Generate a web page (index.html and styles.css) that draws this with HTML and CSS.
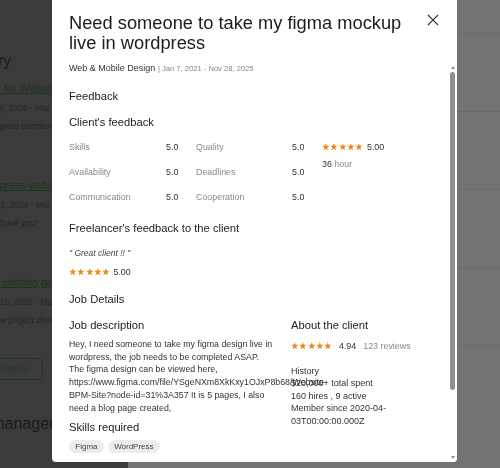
FILE: index.html
```html
<!DOCTYPE html>
<html lang="en">
<head>
<meta charset="utf-8">
<title>Job feedback</title>
<link rel="stylesheet" href="styles.css">
</head>
<body>
<svg class="defs" aria-hidden="true"><symbol id="star" viewBox="0 0 10 10"><path d="M5 .4L6.25 3.6L9.75 3.75L7 5.95L7.95 9.4L5 7.45L2.05 9.4L3 5.95L.25 3.75L3.75 3.6Z"/></symbol></svg>

<div class="page">
  <main class="bg-main">
    <h2 class="bg-h bg-h1">Work History</h2>
    <div class="job job-first">
      <a class="job-link l1">Designer for Website redesign</a>
      <div class="job-date d1">Jan 9, 2026 - Mar 2, 2026</div>
      <div class="job-quote q1">"Was a great communicator"</div>
    </div>
    <div class="job">
      <a class="job-link l2">Wordpress webpage build</a>
      <div class="job-date d2">Feb 3, 2026 - Mar 2, 2026</div>
      <div class="job-quote q2">"Thank you"</div>
    </div>
    <div class="job">
      <a class="job-link l3">Update existing page</a>
      <div class="job-date d3">Dec 15, 2025 - Mar 1, 2026</div>
      <div class="job-quote q3">"Gave new project direction"</div>
    </div>
    <button class="bg-btn">View all history</button>
    <h2 class="bg-h bg-h2">Project manager</h2>
  </main>
  <aside class="bg-side">
    <div class="side-row side-first"></div>
    <div class="side-row"></div>
    <div class="side-row"></div>
    <div class="side-row"></div>
    <div class="side-row"></div>
  </aside>
</div>

<div class="overlay">
  <div class="modal">
    <header class="modal-head">
      <h1 class="title">Need someone to take my figma mockup live in wordpress</h1>
      <button class="close" aria-label="Close"><svg viewBox="0 0 12 12"><path d="M1 1L11 11M11 1L1 11"/></svg></button>
    </header>
    <div class="modal-main">
      <div class="modal-body">
        <div class="meta">Web &amp; Mobile Design <span class="dates">| Jan 7, 2021 - Nov 28, 2025</span></div>

        <h2 class="h-sec h-feedback">Feedback</h2>
        <h3 class="h-sec h-client">Client's feedback</h3>
        <div class="ratings">
          <div class="scores">
            <span class="lbl">Skills</span><span class="val">5.0</span>
            <span class="lbl">Quality</span><span class="val">5.0</span>
            <span class="lbl">Availability</span><span class="val">5.0</span>
            <span class="lbl">Deadlines</span><span class="val">5.0</span>
            <span class="lbl">Communication</span><span class="val">5.0</span>
            <span class="lbl">Cooperation</span><span class="val">5.0</span>
          </div>
          <div class="overall">
            <div class="overall-stars">
              <span class="stars"><svg><use href="#star"/></svg><svg><use href="#star"/></svg><svg><use href="#star"/></svg><svg><use href="#star"/></svg><svg><use href="#star"/></svg></span>
              <span class="score">5.00</span>
            </div>
            <div class="hours"><span class="num">36</span> hour</div>
          </div>
        </div>

        <h3 class="h-sec h-freelancer">Freelancer's feedback to the client</h3>
        <div class="quote">" Great client !! "</div>
        <div class="rating-line">
          <span class="stars"><svg><use href="#star"/></svg><svg><use href="#star"/></svg><svg><use href="#star"/></svg><svg><use href="#star"/></svg><svg><use href="#star"/></svg></span>
          <span class="score">5.00</span>
        </div>

        <h2 class="h-sec h-details">Job Details</h2>
        <div class="details">
          <div class="details-main">
            <h3 class="h-sec h-sub">Job description</h3>
            <p class="desc">Hey, I need someone to take my figma design live in wordpress, the job needs to be completed ASAP. The figma design can be viewed here, https://www.figma.com/file/YSgeNXm8XkKxy1OJxP8b68/Website-BPM-Site?node-id=31%3A357 It is 5 pages, I also need a blog page created,</p>
            <h3 class="h-sec h-skills">Skills required</h3>
            <div class="chips"><span class="chip">Figma</span><span class="chip">WordPress</span></div>
          </div>
          <div class="details-side">
            <h3 class="h-sec h-sub">About the client</h3>
            <div class="client-rating">
              <span class="stars"><svg><use href="#star"/></svg><svg><use href="#star"/></svg><svg><use href="#star"/></svg><svg><use href="#star"/></svg><svg><use href="#star"/></svg></span>
              <span class="score">4.94</span>
              <span class="reviews">123 reviews</span>
            </div>
            <div class="client-info">
              <div>History</div>
              <div>$20,000+ total spent</div>
              <div>160 hires , 9 active</div>
              <div>Member since 2020-04-03T00:00:00.000Z</div>
            </div>
          </div>
        </div>
      </div>
      <div class="scrollbar" aria-hidden="true">
        <span class="sb-btn"><span class="sb-arrow sb-arrow-up"></span></span>
        <span class="sb-track"><span class="sb-thumb"></span></span>
        <span class="sb-btn"><span class="sb-arrow sb-arrow-down"></span></span>
      </div>
    </div>
  </div>
</div>
</body>
</html>
```

FILE: styles.css
```css
* { box-sizing: border-box; }

html, body {
  margin: 0;
  width: 500px;
  height: 468px;
  overflow: hidden;
  font-family: "Liberation Sans", Arial, sans-serif;
  background: #3b3b3b;
}

.defs { position: absolute; width: 0; height: 0; overflow: hidden; }

/* ---------- background page (dimmed) ---------- */
.page {
  display: flex;
  height: 468px;
  background: #3b3b3b;
}

.bg-main {
  width: 128px;
  flex: none;
  background: #3b3b3b;
  overflow: hidden;
  padding-top: 51px;
  white-space: nowrap;
}

.bg-h {
  margin: 0;
  font-size: 16px;
  line-height: 20px;
  font-weight: normal;
  color: #1c1c1c;
}
.bg-h1 { margin-left: -80px; }
.bg-h2 { margin-top: 34px; margin-left: -63px; }

.job { margin-top: 45px; }
.job-first { margin-top: 9px; }

.job-link {
  display: block;
  font-size: 10.7px;
  line-height: 16px;
  color: #1a361d;
  text-decoration: underline;
}
.job-date {
  margin-top: 6px;
  font-size: 8.5px;
  line-height: 12px;
  color: #272727;
}
.job-quote {
  margin-top: 6px;
  font-size: 8.5px;
  line-height: 12px;
  font-style: italic;
  color: #242424;
}
.l1 { margin-left: -42px; }
.d1 { margin-left: -17px; }
.q1 { margin-left: -30px; }
.l2 { margin-left: -26px; }
.d2 { margin-left: -17px; }
.q2 { margin-left: -8px; }
.l3 { margin-left: -36px; }
.d3 { margin-left: -18px; }
.q3 { margin-left: -35px; }

.bg-btn {
  display: block;
  margin-top: 32px;
  margin-left: -45px;
  height: 22px;
  padding: 0 13px;
  border: 1px solid #1c3a1f;
  border-radius: 5px;
  background: transparent;
  font-family: "Liberation Sans", Arial, sans-serif;
  font-size: 9px;
  color: #203c23;
}

.bg-side {
  flex: 1;
  background: #737373;
}
.side-row {
  height: 78px;
  border-bottom: 1px solid #6b6b6b;
}
.side-row.side-first { height: 34px; }

/* ---------- modal ---------- */
.overlay {
  position: fixed;
  inset: 0;
  padding-left: 52px;
}

.modal {
  width: 405px;
  height: 462px;
  background: #fff;
  border-radius: 0 0 4px 4px;
  display: flex;
  flex-direction: column;
  overflow: hidden;
  color: #222;
}

.modal-head {
  display: flex;
  align-items: flex-start;
  gap: 10px;
  padding: 12.5px 18px 9.5px 17px;
}

.title {
  flex: 1;
  margin: 0;
  font-size: 18.3px;
  line-height: 20px;
  font-weight: normal;
  color: #1c1c1c;
}

.close {
  flex: none;
  width: 12px;
  height: 12px;
  margin-top: 1.5px;
  padding: 0;
  border: 0;
  background: transparent;
}
.close svg {
  display: block;
  width: 12px;
  height: 12px;
  stroke: #3a3a3a;
  stroke-width: 1.1;
  fill: none;
}

.modal-main {
  flex: 1;
  min-height: 0;
  display: flex;
}

.modal-body {
  flex: 1;
  min-width: 0;
  overflow: hidden;
  padding: 0 8px 0 17px;
}

/* scrollbar drawn as part of the modal */
.scrollbar {
  width: 9px;
  flex: none;
  display: flex;
  flex-direction: column;
  background: #fff;
}
.sb-btn {
  height: 10px;
  flex: none;
  display: flex;
  align-items: center;
  justify-content: center;
}
.sb-arrow {
  width: 0;
  height: 0;
  border-left: 2.5px solid transparent;
  border-right: 2.5px solid transparent;
}
.sb-arrow-up { border-bottom: 3.5px solid #8f8f8f; }
.sb-arrow-down { border-top: 3.5px solid #8f8f8f; }
.sb-track {
  flex: 1;
  padding: 0 2px;
}
.sb-thumb {
  display: block;
  height: 318px;
  background: #8f8f8f;
  border-radius: 3px;
}

.meta {
  font-size: 9px;
  line-height: 12px;
  color: #333;
}
.dates {
  font-size: 7.6px;
  color: #858585;
}

.h-sec {
  margin: 0;
  font-size: 11.2px;
  line-height: 14px;
  font-weight: normal;
  color: #222;
}
.h-feedback { margin-top: 14px; }
.h-client { margin-top: 12px; }
.h-freelancer { margin-top: 11.5px; }
.h-details { margin-top: 14px; }
.h-skills { margin-top: 6px; }

.ratings {
  display: flex;
  margin-top: 5.5px;
  font-size: 8.9px;
}
.scores {
  display: grid;
  grid-template-columns: 97px 30px 96px 30px;
  grid-auto-rows: 25px;
  align-items: center;
}
.lbl { color: #888; }
.val { color: #333; }

.overall-stars {
  height: 25px;
  display: flex;
  align-items: center;
  gap: 4px;
}
.hours {
  margin-top: -1.5px;
  line-height: 12px;
  color: #888;
}
.hours .num { color: #333; }

.stars {
  display: inline-flex;
  gap: 0.75px;
}
.stars svg {
  display: block;
  width: 7.6px;
  height: 7.6px;
  fill: #ef8916;
}
.score { color: #333; }

.quote {
  margin-top: 12px;
  font-size: 8.5px;
  line-height: 12px;
  font-style: italic;
  color: #444;
}
.rating-line {
  margin-top: 7px;
  height: 12px;
  display: flex;
  align-items: center;
  gap: 3.5px;
  font-size: 8.9px;
}

.details {
  display: grid;
  grid-template-columns: 206px 1fr;
  column-gap: 16px;
  margin-top: 12px;
}

.desc {
  margin: 6px 0 0;
  font-size: 8.8px;
  line-height: 12.7px;
  color: #333;
}

.chips {
  display: flex;
  gap: 4px;
  margin-top: 6px;
}
.chip {
  height: 13px;
  padding: 0 6.3px;
  border-radius: 7px;
  background: #ececec;
  font-size: 8px;
  line-height: 13px;
  color: #444;
}

.client-rating {
  margin-top: 8px;
  height: 12px;
  display: flex;
  align-items: center;
  gap: 7px;
  font-size: 8.9px;
}
.reviews { color: #888; }

.client-info {
  margin-top: 12.75px;
  font-size: 9px;
  line-height: 12.5px;
  color: #333;
}
```
